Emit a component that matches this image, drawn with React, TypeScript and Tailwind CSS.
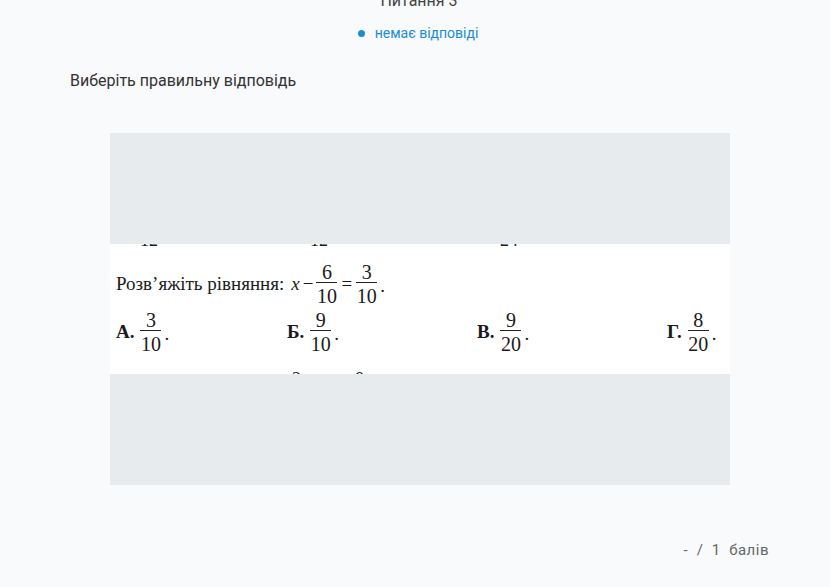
import React from "react";

function Frac({ n, d, w = "w-[21px]" }: { n: string; d: string; w?: string }) {
  return (
    <span className={`inline-flex flex-col items-center ${w} align-middle`}>
      <span className="leading-[20px] text-[20px]">{n}</span>
      <span className="block w-full border-t border-[#222]" />
      <span className="leading-[21px] text-[20px] pt-[3px]">{d}</span>
    </span>
  );
}

function Option({ label, n, d, w }: { label: string; n: string; d: string; w: string }) {
  return (
    <div className={`flex items-center ${w}`}>
      <span className="font-bold text-[19px] mr-[6px]">{label}</span>
      <Frac n={n} d={d} />
      <span className="text-[19px] ml-[3px] mt-[4px]">.</span>
    </div>
  );
}

export default function App() {
  return (
    <div className="w-[830px] h-[587px] bg-[#f8fafc] overflow-hidden font-['Roboto',sans-serif] flex flex-col">
      <div className="mt-[-9px] pl-[8px] text-center text-[16px] leading-[20px] text-[#444]">Питання 3</div>
      <div className="mt-[13px] flex items-center justify-center gap-[10px] pl-[6px] text-[14px] leading-[18px] text-[#1a8cd8]">
        <span className="w-[7px] h-[7px] rounded-full bg-[#1a8cd8]" />
        <span>немає відповіді</span>
      </div>
      <div className="mt-[29px] ml-[70px] text-[16px] leading-[20px] text-[#333]">Виберіть правильну відповідь</div>
      <div className="mt-[42px] ml-[110px] w-[620px] h-[352px] bg-[#e8ebee] flex flex-col">
        <div className="mt-[111px] h-[130px] bg-white overflow-hidden font-['Liberation_Serif',serif] text-[#1a1a1a]">
          <div className="flex h-[3px] overflow-hidden items-start text-[18px] leading-[18px]">
            <span className="ml-[30px] mt-[-13px]">12</span>
            <span className="ml-[152px] mt-[-13px]">12</span>
            <span className="ml-[172px] mt-[-13px]">24</span>
          </div>
          <div className="mt-[13px] flex items-center pl-[6px] h-[48px] text-[19px]">
            <span>Розв’яжіть рівняння:</span>
            <span className="italic ml-[7px]">x</span>
            <span className="ml-[3px] mr-[3px]">−</span>
            <Frac n="6" d="10" />
            <span className="mx-[4px]">=</span>
            <Frac n="3" d="10" />
            <span className="ml-[3px] mt-[4px]">.</span>
          </div>
          <div className="flex items-center pl-[6px] h-[48px]">
            <Option label="А." n="3" d="10" w="w-[171px]" />
            <Option label="Б." n="9" d="10" w="w-[190px]" />
            <Option label="В." n="9" d="20" w="w-[190px]" />
            <Option label="Г." n="8" d="20" w="w-[60px]" />
          </div>
          <div className="mt-[14px] h-[4px] overflow-hidden flex text-[18px] leading-[18px]">
            <span className="ml-[182px]">2</span>
            <span className="ml-[54px]">8</span>
          </div>
        </div>
      </div>
      <div className="mt-[55px] mr-[61px] self-end text-[15px] leading-[20px] text-[#666] tracking-[0.5px]">- &nbsp;/ &nbsp;1 &nbsp;балів</div>
    </div>
  );
}
